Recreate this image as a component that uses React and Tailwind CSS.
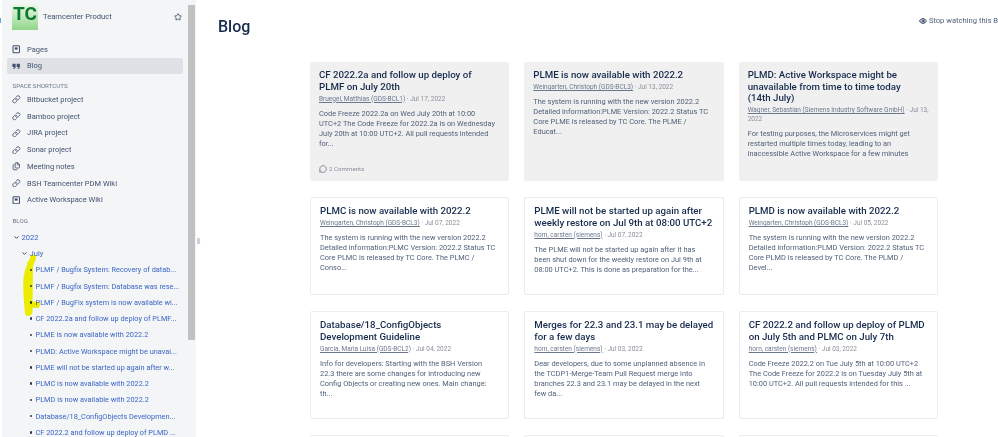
import { Link, Star, Eye, MessageCircle, ChevronDown, Files } from 'lucide-react';

const shortcuts = [
  { label: 'Bitbucket project', Icon: Link },
  { label: 'Bamboo project', Icon: Link },
  { label: 'JIRA project', Icon: Link },
  { label: 'Sonar project', Icon: Link },
  { label: 'Meeting notes', Icon: Files },
  { label: 'BSH Teamcenter PDM Wiki', Icon: Link },
  { label: 'Active Workspace Wiki', Icon: PageIcon },
];

const posts = [
  'PLMF / Bugfix System: Recovery of datab...',
  'PLMF / Bugfix System: Database was rese...',
  'PLMF / BugFix system is now available wi...',
  'CF 2022.2a and follow up deploy of PLMF...',
  'PLME is now available with 2022.2',
  'PLMD: Active Workspace might be unavai...',
  'PLME will not be started up again after w...',
  'PLMC is now available with 2022.2',
  'PLMD is now available with 2022.2',
  'Database/18_ConfigObjects Developmen...',
  'CF 2022.2 and follow up deploy of PLMD ...',
];

const rows = [
  { h: 'h-[119px]', grey: true, cards: [
    { title: 'CF 2022.2a and follow up deploy of\nPLMF on July 20th', author: 'Bruegel, Matthias (GDS-BCL1)', date: 'Jul 17, 2022', comments: '2 Comments',
      body: 'Code Freeze 2022.2a on Wed July 20th at 10:00\nUTC+2 The Code Freeze for 2022.2a is on Wednesday\nJuly 20th at 10:00 UTC+2. All pull requests intended\nfor...' },
    { title: 'PLME is now available with 2022.2', author: 'Weingarten, Christoph (GDS-BCL3)', date: 'Jul 13, 2022',
      body: 'The system is running with the new version 2022.2\nDetailed information:PLME Version: 2022.2 Status TC\nCore PLME is released by TC Core. The PLME /\nEducat...' },
    { title: 'PLMD: Active Workspace might be\nunavailable from time to time today\n(14th July)', author: 'Wagner, Sebastian (Siemens Industry Software GmbH)', date: 'Jul 13, 2022',
      body: 'For testing purposes, the Microservices might get\nrestarted multiple times today, leading to an\ninaccessible Active Workspace for a few minutes' },
  ] },
  { h: 'h-[98px]', cards: [
    { title: 'PLMC is now available with 2022.2', author: 'Weingarten, Christoph (GDS-BCL3)', date: 'Jul 07, 2022',
      body: 'The system is running with the new version 2022.2\nDetailed information:PLMC Version: 2022.2 Status TC\nCore PLMC is released by TC Core. The PLMC /\nConso...' },
    { title: 'PLME will not be started up again after\nweekly restore on Jul 9th at 08:00 UTC+2', author: 'horn, carsten (siemens)', date: 'Jul 07, 2022',
      body: 'The PLME will not be started up again after it has\nbeen shut down for the weekly restore on Jul 9th at\n08:00 UTC+2. This is done as preparation for the...' },
    { title: 'PLMD is now available with 2022.2', author: 'Weingarten, Christoph (GDS-BCL3)', date: 'Jul 05, 2022',
      body: 'The system is running with the new version 2022.2\nDetailed information:PLMD Version: 2022.2 Status TC\nCore PLMD is released by TC Core. The PLMD /\nDevel...' },
  ] },
  { h: 'h-[108px]', cards: [
    { title: 'Database/18_ConfigObjects\nDevelopment Guideline', author: 'Garcia, Maria Luisa (GDS-BCL2)', date: 'Jul 04, 2022',
      body: 'Info for developers: Starting with the BSH Version\n22.3 there are some changes for introducing new\nConfig Objects or creating new ones. Main change:\nth...' },
    { title: 'Merges for 22.3 and 23.1 may be delayed\nfor a few days', author: 'horn, carsten (siemens)', date: 'Jul 03, 2022',
      body: 'Dear developers, due to some unplanned absence in\nthe TCDP1-Merge-Team Pull Request merge into\nbranches 22.3 and 23.1 may be delayed in the next\nfew da...' },
    { title: 'CF 2022.2 and follow up deploy of PLMD\non July 5th and PLMC on July 7th', author: 'horn, carsten (siemens)', date: 'Jul 03, 2022',
      body: 'Code Freeze 2022.2 on Tue July 5th at 10:00 UTC+2\nThe Code Freeze for 2022.2 is on Tuesday July 5th at\n10:00 UTC+2. All pull requests intended for this ...' },
  ] },
];

// confluence page glyph, lucide has nothing this square
function PageIcon({ className }) {
  return (
    <svg className={className} viewBox="0 0 10 10" fill="none">
      <rect x="1.2" y="0.8" width="7.6" height="8.4" rx="1" stroke="currentColor" strokeWidth="1.2" />
      <rect x="3.2" y="2.8" width="3.4" height="2.6" fill="currentColor" />
    </svg>
  );
}

function BlogIcon({ className }) {
  return (
    <svg className={className} viewBox="0 0 10 10" fill="currentColor">
      <path d="M0.5 2h3.8v3.4c0 1.6-1 2.6-2.6 2.8l-.3-1c.8-.2 1.2-.6 1.2-1.2H.5zM5.5 2h3.8v3.4c0 1.6-1 2.6-2.6 2.8l-.3-1c.8-.2 1.2-.6 1.2-1.2H5.5z" />
    </svg>
  );
}

function NavRow({ Icon, label, active }) {
  return (
    <div className={`flex h-[16.7px] items-center gap-[6.5px] rounded-[2px] pl-[5.5px] text-[7.5px] text-[#42526e] ${active ? 'bg-[#dfe1e6]' : ''}`}>
      <Icon className="h-[8.5px] w-[8.5px] shrink-0" strokeWidth={2.4} />
      <span className="truncate">{label}</span>
    </div>
  );
}

function Card({ card, grey }) {
  return (
    <div className={`relative flex min-w-0 flex-col rounded-[2px] px-[9px] pt-[7px] ${grey ? 'bg-[#f0f0f0]' : 'border border-[#ebecf0] bg-white'}`}>
      <h3 className="text-[9.7px] leading-[11.5px] font-medium whitespace-pre-line text-[#172b4d]">{card.title}</h3>
      <p className="mt-[2.5px] text-[6.5px] leading-[9px] text-[#8a8f99]">
        <span className="text-[#6b778c] underline">{card.author}</span> · {card.date}
      </p>
      <p className="mt-[5px] text-[7.4px] leading-[10px] whitespace-pre-line text-[#505f79]">{card.body}</p>
      {card.comments && (
        <div className="absolute bottom-[7px] left-[9px] flex items-center gap-[2px] text-[6.2px] text-[#8a8f99]">
          <MessageCircle className="h-[8px] w-[8px] text-[#505f79]" />
          {card.comments}
        </div>
      )}
    </div>
  );
}

export default function App() {
  return (
    <div className="relative flex h-[437px] w-[998px] overflow-hidden bg-white font-['Roboto','Open_Sans',sans-serif]">
      <aside className="flex h-full w-[196px] shrink-0 border-l-2 border-white bg-[#f4f5f7]">
        <div className="w-[186px] shrink-0 overflow-hidden pr-[5.5px] pl-[4.5px]">
          <div className="flex h-[39px] items-start pt-[4px] pl-[5.5px]">
            <div className="flex h-[26px] w-[26px] shrink-0 items-start justify-center bg-gradient-to-b from-[#eef8ea] to-[#8fd68a] text-[19px] leading-[19px] font-bold text-[#0a7a32]">TC</div>
            <span className="mt-[8px] ml-[5px] flex-1 text-[7.6px] leading-[10px] text-[#42526e]">Teamcenter Product</span>
            <Star className="mt-[9px] mr-[1px] h-[8px] w-[8px] text-[#253858]" strokeWidth={2.2} />
          </div>
          <div className="mt-[2px]">
            <NavRow Icon={PageIcon} label="Pages" />
            <NavRow Icon={BlogIcon} label="Blog" active />
          </div>
          <div className="mt-[8px] pl-[6px] text-[6.2px] leading-[9px] text-[#6b778c]">SPACE SHORTCUTS</div>
          <div>
            {shortcuts.map(s => <NavRow key={s.label} Icon={s.Icon} label={s.label} />)}
          </div>
          <div className="mt-[9px] pl-[6px] text-[6.2px] leading-[9px] text-[#6b778c]">BLOG</div>
          <div className="mt-[3px] flex h-[16.5px] items-center gap-[2px] pl-[6px] text-[7.6px] text-[#3b66c4]">
            <ChevronDown className="h-[7px] w-[7px] text-[#253858]" strokeWidth={3} /> 2022
          </div>
          <div className="flex h-[16px] items-center gap-[2px] pl-[14px] text-[7.6px] text-[#3b66c4]">
            <ChevronDown className="h-[7px] w-[7px] text-[#253858]" strokeWidth={3} /> July
          </div>
          {posts.map(p => (
            <div key={p} className="flex h-[16.25px] items-center gap-[3.5px] pl-[23px] text-[7.35px] text-[#3b66c4]">
              <span className="h-[2.5px] w-[2.5px] shrink-0 rounded-full bg-[#253858]" />
              <span className="whitespace-nowrap">{p}</span>
            </div>
          ))}
        </div>
        <div className="flex w-[8px] shrink-0 flex-col">
          <div className="h-[5px]" />
          <div className="h-[335px] w-[7px] bg-[#c1c1c1]" />
        </div>
      </aside>

      <div className="w-[22px] shrink-0 pt-[238px] pl-[1px]">
        <div className="h-[6px] w-[3px] bg-[#ccd3de]" />
      </div>

      <main className="min-w-0 flex-1">
        <div className="flex h-[62px] items-start">
          <h1 className="mt-[16px] text-[16px] leading-[22px] font-medium text-[#172b4d]">Blog</h1>
          <div className="mt-[16px] ml-auto flex shrink-0 items-center gap-[2px] text-[7.6px] leading-[10px] whitespace-nowrap text-[#505f79]">
            <Eye className="h-[8px] w-[8px] text-[#253858]" strokeWidth={3} />
            Stop watching this B
          </div>
        </div>
        <div className="ml-[92px] flex w-[628px] flex-col gap-[16px]">
          {rows.map((row, i) => (
            <div key={i} className={`grid grid-cols-3 gap-[15px] ${row.h}`}>
              {row.cards.map(c => <Card key={c.title} card={c} grey={row.grey} />)}
            </div>
          ))}
          <div className="grid h-[40px] grid-cols-3 gap-[15px]">
            <div className="rounded-[2px] border border-[#ebecf0] bg-white" />
            <div className="rounded-[2px] border border-[#ebecf0] bg-white" />
            <div className="rounded-[2px] border border-[#ebecf0] bg-white" />
          </div>
        </div>
      </main>

      {/* marker scribble over the first three posts */}
      <svg className="pointer-events-none absolute top-[250px] left-0 mix-blend-multiply" width="45" height="70" viewBox="0 0 45 70">
        <path d="M33 8 C31 15 28 16 26.5 28 C25.5 40 27 52 28 63 M30 14 L29.5 62 M29 54 L37 55" fill="none" stroke="#f6f600" strokeWidth="6" strokeLinecap="round" />
      </svg>
      {/* sliver of the neighbouring window at the left edge */}
      <span className="absolute top-[18px] left-0 h-[5px] w-[1px] bg-[#5aa7d8]" />
    </div>
  );
}
